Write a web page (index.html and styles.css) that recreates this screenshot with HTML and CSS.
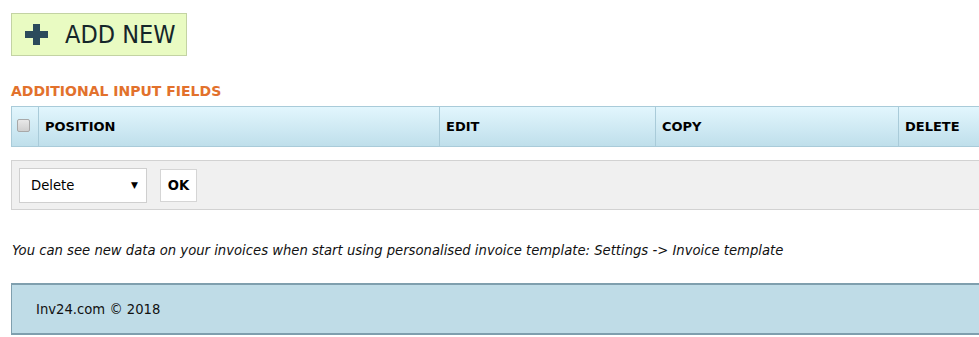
FILE: index.html
```html
<!DOCTYPE html>
<html>
<head>
<meta charset="utf-8">
<link rel="stylesheet" href="styles.css">
</head>
<body>
<div class="page">
  <a class="add-btn" href="#">
    <svg class="plus" width="23" height="21" viewBox="0 0 23 21"><path d="M8 0h7v7h8v7h-8v7H8v-7H0V7h8z" fill="#2b4a5c"/></svg>
    <span>ADD NEW</span>
  </a>
  <h2 class="section-title">ADDITIONAL INPUT FIELDS</h2>
  <div class="grid-head">
    <div class="cell cell-check"><span class="checkbox"></span></div>
    <div class="cell">POSITION</div>
    <div class="cell">EDIT</div>
    <div class="cell">COPY</div>
    <div class="cell">DELETE</div>
  </div>
  <div class="actions">
    <div class="select"><span>Delete</span><span class="arrow">▼</span></div>
    <button class="ok">OK</button>
  </div>
  <p class="note">You can see new data on your invoices when start using personalised invoice template: Settings -&gt; Invoice template</p>
  <div class="footer">Inv24.com © 2018</div>
</div>
</body>
</html>
```
FILE: styles.css
```css
html, body { margin: 0; padding: 0; background: #fff; }
body { font-family: "DejaVu Sans", sans-serif; font-size: 13.2px; color: #000; }
.page { overflow: hidden; padding: 13px 0 0 11px; height: 324px; }
.add-btn {
  display: flex; align-items: center; width: 174px; height: 41px;
  border: 1px solid #c3d3a3; background: #e9fbc2; text-decoration: none;
  color: #15262a; font-family: "DejaVu Sans Condensed", "DejaVu Sans", sans-serif; font-size: 25px;
}
.plus { margin-left: 13px; margin-right: 17px; }
.section-title { margin: 27px 0 0; font-size: 14px; font-weight: bold; color: #e2712c; line-height: 16px; }
.grid-head {
  margin-top: 7px; width: 1000px; height: 39px;
  display: grid; grid-template-columns: 26px 401px 216px 243px 1fr;
  border: 1px solid #a9cbd9; border-right: 0;
  background: linear-gradient(#e2f6fd, #bfdfeb);
}
.cell { display: flex; align-items: center; padding-left: 6px; font-weight: bold; font-size: 13px; border-left: 1px solid #a9cbd9; }
.cell:first-child { border-left: 0; padding-left: 5px; }
.checkbox { width: 11px; height: 11px; border: 1px solid #a8a8a8; border-radius: 2px; background: linear-gradient(#e8e8e8, #cfcfcf); margin-top: -2px; }
.actions {
  margin-top: 13px; width: 1000px; height: 50px; box-sizing: border-box;
  display: flex; align-items: center; gap: 13px; padding-left: 7px;
  background: #f0f0f0; border: 1px solid #d2d2d2; border-right: 0;
}
.select {
  background: #fff; border: 1px solid #cfcfcf;
  display: flex; align-items: center; justify-content: space-between; padding: 0 8px 0 11px; box-sizing: border-box; width: 128px; height: 35px;
}
.arrow { font-size: 9px; }
.ok {
  width: 37px; height: 33px; background: #fff; border: 1px solid #d5d5d5; font: bold 13.2px "DejaVu Sans", sans-serif; color: #000; padding: 0;
}
.note { margin: 33px 0 0 1px; font-style: italic; line-height: 16px; color: #111; }
.footer {
  margin-top: 24px; width: 1000px; height: 48px;
  display: flex; align-items: center; padding-left: 24px;
  background: #bfdce7; border-top: 2px solid #7f9fae; border-bottom: 2px solid #7f9fae; border-left: 1px solid #7f9fae; color: #111;
}
```
